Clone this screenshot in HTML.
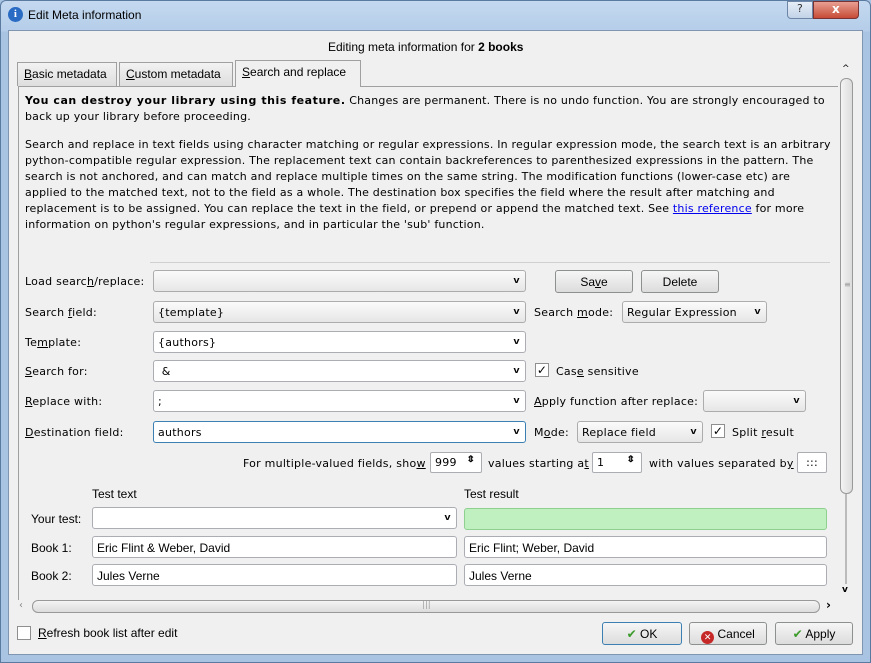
<!DOCTYPE html>
<html><head><meta charset="utf-8"><style>
*{box-sizing:border-box;margin:0;padding:0}
body{width:871px;height:663px;overflow:hidden;background:#a9c4e3;font-family:"DejaVu Sans","Liberation Sans",sans-serif;font-size:11px;color:#000;position:relative;letter-spacing:0.25px}
.a{position:absolute;white-space:nowrap}
.seg{font-family:"Liberation Sans",sans-serif;font-size:12px;letter-spacing:0}
.frame{position:absolute;left:0;top:0;width:871px;height:663px;background:linear-gradient(180deg,#c4d9f0 0,#b5cde9 30px,#a9c4e3 31px);border:1px solid #5b7aa0;border-radius:6px 6px 0 0}
.client{position:absolute;left:8px;top:30px;width:855px;height:625px;background:#f0f0f0;border:1px solid #7f95b0}
.combo{position:absolute;height:22px;background:linear-gradient(#fbfbfb,#e6e6e6);border:1px solid #acacac;border-radius:3px;padding:4px 4px;white-space:nowrap}
.edit{position:absolute;height:22px;background:#fff;border:1px solid #abadb3;border-radius:3px;padding:4px 4px;white-space:nowrap}
.arr{position:absolute;right:6px;top:4px;font-size:9px;font-weight:bold;font-family:"Liberation Sans",sans-serif;transform:scaleX(1.2)}
.btn{position:absolute;height:23px;background:linear-gradient(#f6f6f6,#dcdcdc);border:1px solid #8e8f8f;border-radius:3px;text-align:center;padding-top:4px;font-family:"Liberation Sans",sans-serif;font-size:12px;letter-spacing:0}
.cb{position:absolute;width:14px;height:14px;background:#fff;border:1px solid #8f8f8f;font-size:12px;line-height:12px;text-align:center;font-weight:bold}
.tab{position:absolute;top:62px;height:24px;background:linear-gradient(#f2f2f2,#dedede);border:1px solid #a0a0a0;border-bottom:none;padding:4px 6px;font-family:"Liberation Sans",sans-serif;font-size:12px;letter-spacing:0}
u{text-decoration:underline}
.spin{position:absolute;height:21px;background:#fff;border:1px solid #abadb3;border-radius:2px;padding:3px 4px}
</style></head><body>
<div class="frame"></div>
<div class="a" style="left:8px;top:7px;width:15px;height:15px;border-radius:50%;background:#2a6bc4;color:#fff;font:bold 11px 'Liberation Serif',serif;text-align:center;line-height:15px">i</div>
<div class="a seg" style="left:28px;top:8px">Edit Meta information</div>
<div class="a" style="left:787px;top:1px;width:26px;height:18px;border:1px solid #6d86a8;border-radius:0 0 0 4px;background:linear-gradient(#e6eef8,#c3d3e8);text-align:center;font-size:11px;color:#333">?</div>
<div class="a" style="left:813px;top:1px;width:46px;height:18px;border:1px solid #7a3333;border-radius:0 0 4px 0;background:linear-gradient(#e8a093,#c74a36);text-align:center;color:#fff;font-weight:bold;font-size:12px">x</div>
<div class="client"></div>
<div class="a seg" style="left:328px;top:40px">Editing meta information for <b>2 books</b></div>
<div class="tab" style="left:17px;width:100px"><u>B</u>asic metadata</div>
<div class="tab" style="left:119px;width:114px"><u>C</u>ustom metadata</div>
<div class="tab" style="left:235px;top:60px;height:27px;width:126px;background:#f0f0f0;z-index:2"><u>S</u>earch and replace</div>
<div class="a" style="left:18px;top:86px;width:820px;height:514px;border:1px solid #a0a0a0;border-bottom:none;border-right:none"></div>
<div class="a" style="left:842px;top:64px;font-size:9px">^</div>
<div class="a" style="left:840px;top:78px;width:13px;height:416px;border:1px solid #999;border-radius:6px;background:linear-gradient(90deg,#f4f4f4,#dcdcdc)"></div>
<div class="a" style="left:844px;top:280px;font-size:8px;color:#999">≡</div>
<div class="a" style="left:845px;top:494px;width:2px;height:90px;background:#bbb"></div>
<div class="a" style="left:842px;top:585px;font-size:9px;font-weight:bold">v</div>
<div class="a" style="left:19px;top:600px;font-size:10px;color:#888">‹</div>
<div class="a" style="left:32px;top:600px;width:788px;height:13px;border:1px solid #999;border-radius:6px;background:linear-gradient(#f4f4f4,#dcdcdc)"></div>
<div class="a" style="left:422px;top:600px;font-size:8px;color:#999">|||</div>
<div class="a" style="left:826px;top:598px;font-size:12px;font-weight:bold">›</div>

<div class="a" style="left:25px;top:93px;line-height:16px;letter-spacing:0.2px"><b style="letter-spacing:0.55px">You can destroy your library using this feature.</b> Changes are permanent. There is no undo function. You are strongly encouraged to<br>back up your library before proceeding.</div>
<div class="a" style="left:25px;top:137px;line-height:16px;letter-spacing:0.2px">Search and replace in text fields using character matching or regular expressions. In regular expression mode, the search text is an arbitrary<br>python-compatible regular expression. The replacement text can contain backreferences to parenthesized expressions in the pattern. The<br>search is not anchored, and can match and replace multiple times on the same string. The modification functions (lower-case etc) are<br>applied to the matched text, not to the field as a whole. The destination box specifies the field where the result after matching and<br>replacement is to be assigned. You can replace the text in the field, or prepend or append the matched text. See <span style="color:#0000ee;text-decoration:underline">this reference</span> for more<br>information on python's regular expressions, and in particular the 'sub' function.</div>
<div class="a" style="left:150px;top:262px;width:680px;height:1px;background:#d0d0d0"></div>

<div class="a" style="left:25px;top:275px">Load searc<u>h</u>/replace:</div>
<div class="combo" style="left:153px;top:270px;width:373px"><span class="arr">v</span></div>
<div class="btn" style="left:555px;top:270px;width:78px">Sa<u>v</u>e</div>
<div class="btn" style="left:641px;top:270px;width:78px">Delete</div>

<div class="a" style="left:25px;top:306px">Search <u>f</u>ield:</div>
<div class="combo" style="left:153px;top:301px;width:373px">{template}<span class="arr">v</span></div>
<div class="a" style="left:534px;top:306px">Search <u>m</u>ode:</div>
<div class="combo" style="left:622px;top:301px;width:145px">Regular Expression<span class="arr">v</span></div>

<div class="a" style="left:25px;top:336px">Te<u>m</u>plate:</div>
<div class="edit" style="left:153px;top:331px;width:373px">{authors}<span class="arr">v</span></div>

<div class="a" style="left:25px;top:365px"><u>S</u>earch for:</div>
<div class="edit" style="left:153px;top:360px;width:373px">&nbsp;&amp;<span class="arr">v</span></div>
<div class="cb" style="left:535px;top:363px">✓</div>
<div class="a" style="left:556px;top:365px">Cas<u>e</u> sensitive</div>

<div class="a" style="left:25px;top:395px"><u>R</u>eplace with:</div>
<div class="edit" style="left:153px;top:390px;width:373px">;<span class="arr">v</span></div>
<div class="a" style="left:534px;top:395px"><u>A</u>pply function after replace:</div>
<div class="combo" style="left:703px;top:390px;width:103px"><span class="arr">v</span></div>

<div class="a" style="left:25px;top:426px"><u>D</u>estination field:</div>
<div class="edit" style="left:153px;top:421px;width:373px;border-color:#3c7fb1">authors<span class="arr">v</span></div>
<div class="a" style="left:534px;top:426px">M<u>o</u>de:</div>
<div class="combo" style="left:577px;top:421px;width:126px">Replace field<span class="arr">v</span></div>
<div class="cb" style="left:711px;top:424px">✓</div>
<div class="a" style="left:732px;top:426px">Split <u>r</u>esult</div>

<div class="a" style="left:243px;top:457px">For multiple-valued fields, sho<u>w</u></div>
<div class="spin" style="left:430px;top:452px;width:52px">999<span class="arr" style="top:1px;font-size:9px">⇕</span></div>
<div class="a" style="left:488px;top:457px">values starting a<u>t</u></div>
<div class="spin" style="left:592px;top:452px;width:50px">1<span class="arr" style="top:1px;font-size:9px">⇕</span></div>
<div class="a" style="left:649px;top:457px">with values separated b<u>y</u></div>
<div class="spin" style="left:797px;top:452px;width:30px;text-align:center">:::</div>

<div class="a seg" style="left:92px;top:487px">Test text</div>
<div class="a seg" style="left:464px;top:487px">Test result</div>
<div class="a seg" style="left:31px;top:512px">Your test:</div>
<div class="edit seg" style="left:92px;top:507px;width:365px"><span class="arr">v</span></div>
<div class="edit" style="left:464px;top:508px;width:363px;background:#c0f0c0;border-color:#8fcf8f"></div>
<div class="a seg" style="left:31px;top:541px">Book 1:</div>
<div class="edit seg" style="left:92px;top:536px;width:365px">Eric Flint &amp; Weber, David</div>
<div class="edit seg" style="left:464px;top:536px;width:363px">Eric Flint; Weber, David</div>
<div class="a seg" style="left:31px;top:569px">Book 2:</div>
<div class="edit seg" style="left:92px;top:564px;width:365px">Jules Verne</div>
<div class="edit seg" style="left:464px;top:564px;width:363px">Jules Verne</div>

<div class="cb" style="left:17px;top:626px"></div>
<div class="a seg" style="left:38px;top:626px"><u>R</u>efresh book list after edit</div>
<div class="btn" style="left:602px;top:622px;width:80px;border-color:#3c7fb1"><span style="color:#3a9a2a">✔</span> OK</div>
<div class="btn" style="left:689px;top:622px;width:78px"><span style="display:inline-block;width:13px;height:13px;border-radius:50%;background:#c62828;color:#fff;font-size:9px;line-height:13px;vertical-align:-2px">✕</span> Cancel</div>
<div class="btn" style="left:775px;top:622px;width:78px"><span style="color:#3a9a2a">✔</span> Apply</div>
</body></html>
